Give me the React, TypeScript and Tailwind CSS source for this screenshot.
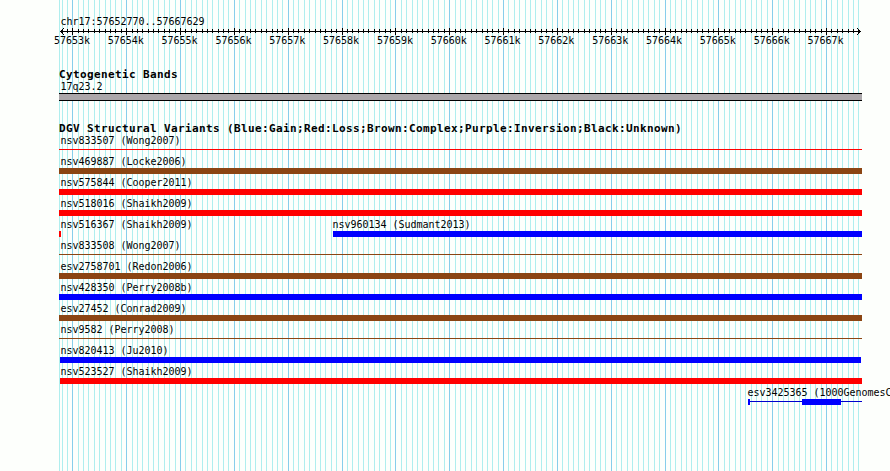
type Segment = { start: number; end: number; thin?: boolean };

type Variant = {
  name: string;
  offset: number;
  color: string;
  segments: Segment[];
};

const RED = "#ff0000";
const BROWN = "#8b4513";
const BLUE = "#0000ff";

const rows: Variant[][] = [
  [{ name: "nsv833507 (Wong2007)", offset: 59, color: RED, segments: [{ start: 59, end: 862, thin: true }] }],
  [{ name: "nsv469887 (Locke2006)", offset: 59, color: BROWN, segments: [{ start: 59, end: 862 }] }],
  [{ name: "nsv575844 (Cooper2011)", offset: 59, color: RED, segments: [{ start: 59, end: 862 }] }],
  [{ name: "nsv518016 (Shaikh2009)", offset: 59, color: RED, segments: [{ start: 59, end: 862 }] }],
  [
    { name: "nsv516367 (Shaikh2009)", offset: 59, color: RED, segments: [{ start: 59, end: 61 }] },
    { name: "nsv960134 (Sudmant2013)", offset: 331, color: BLUE, segments: [{ start: 333, end: 862 }] },
  ],
  [{ name: "nsv833508 (Wong2007)", offset: 59, color: BROWN, segments: [{ start: 59, end: 862, thin: true }] }],
  [{ name: "esv2758701 (Redon2006)", offset: 59, color: BROWN, segments: [{ start: 59, end: 862 }] }],
  [{ name: "nsv428350 (Perry2008b)", offset: 59, color: BLUE, segments: [{ start: 59, end: 862 }] }],
  [{ name: "esv27452 (Conrad2009)", offset: 59, color: BROWN, segments: [{ start: 59, end: 862 }] }],
  [{ name: "nsv9582 (Perry2008)", offset: 59, color: BROWN, segments: [{ start: 59, end: 862, thin: true }] }],
  [{ name: "nsv820413 (Ju2010)", offset: 59, color: BLUE, segments: [{ start: 60, end: 861 }] }],
  [{ name: "nsv523527 (Shaikh2009)", offset: 59, color: RED, segments: [{ start: 60, end: 862 }] }],
  [
    {
      name: "esv3425365 (1000GenomesC",
      offset: 746,
      color: BLUE,
      segments: [
        { start: 748, end: 862, thin: true },
        { start: 748, end: 750 },
        { start: 802, end: 841 },
      ],
    },
  ],
];

// One tick every 100 bp, a major one every 1000 bp
const ticks = Array.from({ length: 149 }, (_, i) => {
  const n = i - 2;
  return { x: Math.floor(72.83 + n * 5.384), major: n % 10 === 0 };
});

const kilobases = Array.from({ length: 15 }, (_, i) => `${57653 + i}k`);

function Grid() {
  return (
    <svg className="absolute inset-0" width="890" height="471" shapeRendering="crispEdges">
      <rect x="59" y="0" width="1" height="471" fill="#afeeee" />
      {ticks.map((t) => (
        <rect key={t.x} x={t.x} y="0" width="1" height="471" fill={t.major ? "#87ceeb" : "#afeeee"} />
      ))}
    </svg>
  );
}

function Ruler() {
  return (
    <svg className="block" width="890" height="8" shapeRendering="crispEdges">
      <rect x="60" y="4" width="801" height="1" />
      {ticks.map((t) => (
        <rect key={t.x} x={t.x} y={t.major ? 1 : 2} width="1" height={t.major ? 7 : 4} />
      ))}
      {[1, 2, 3].map((d) => (
        <g key={d}>
          <rect x={60 + d} y={4 - d} width="1" height="1" />
          <rect x={60 + d} y={4 + d} width="1" height="1" />
          <rect x={860 - d} y={4 - d} width="1" height="1" />
          <rect x={860 - d} y={4 + d} width="1" height="1" />
        </g>
      ))}
    </svg>
  );
}

function VariantRow({ items }: { items: Variant[] }) {
  return (
    <div className="h-[21px]">
      <div className="grid h-3">
        {items.map((v) => (
          <span key={v.name} className="col-start-1 row-start-1 pl-[1.4px] whitespace-nowrap" style={{ marginLeft: v.offset }}>
            {v.name}
          </span>
        ))}
      </div>
      <svg className="block" width="890" height="6" shapeRendering="crispEdges">
        {items.map((v) =>
          v.segments.map((s, i) => (
            <rect
              key={v.name + i}
              x={s.start}
              y={s.thin ? 2 : 0}
              width={s.end - s.start}
              height={s.thin ? 1 : 6}
              fill={s.thin && v.color === BLUE ? "#0000cd" : v.color}
            />
          )),
        )}
      </svg>
    </div>
  );
}

export default function App() {
  return (
    <div className="relative h-[471px] w-[890px] overflow-hidden bg-[#fdfffc] font-['DejaVu_Sans_Mono',monospace] text-[10px] leading-3 tracking-[-0.02px] text-black">
      <Grid />
      <div className="relative">
        <div className="h-[27px] pt-4 pl-[60.4px]">chr17:57652770..57667629</div>
        <Ruler />
        <div className="flex h-[33px] pl-[45px]">
          {kilobases.map((k) => (
            <span key={k} className="w-[53.84px] shrink-0 text-center">
              {k}
            </span>
          ))}
        </div>

        <h2 className="h-[13px] pl-[59px] text-[11px] leading-[13px] font-bold tracking-[0.378px]">Cytogenetic Bands</h2>
        <div className="h-3 pl-[60.4px]">17q23.2</div>
        <div className="ml-[59px] h-2 w-[803px] border-y border-black bg-[#aba7aa]" />

        <h2 className="mt-[21px] h-[13px] pl-[59px] text-[11px] leading-[13px] font-bold tracking-[0.378px]">
          DGV Structural Variants (Blue:Gain;Red:Loss;Brown:Complex;Purple:Inversion;Black:Unknown)
        </h2>
        {rows.map((items) => (
          <VariantRow key={items[0].name} items={items} />
        ))}
      </div>
    </div>
  );
}
